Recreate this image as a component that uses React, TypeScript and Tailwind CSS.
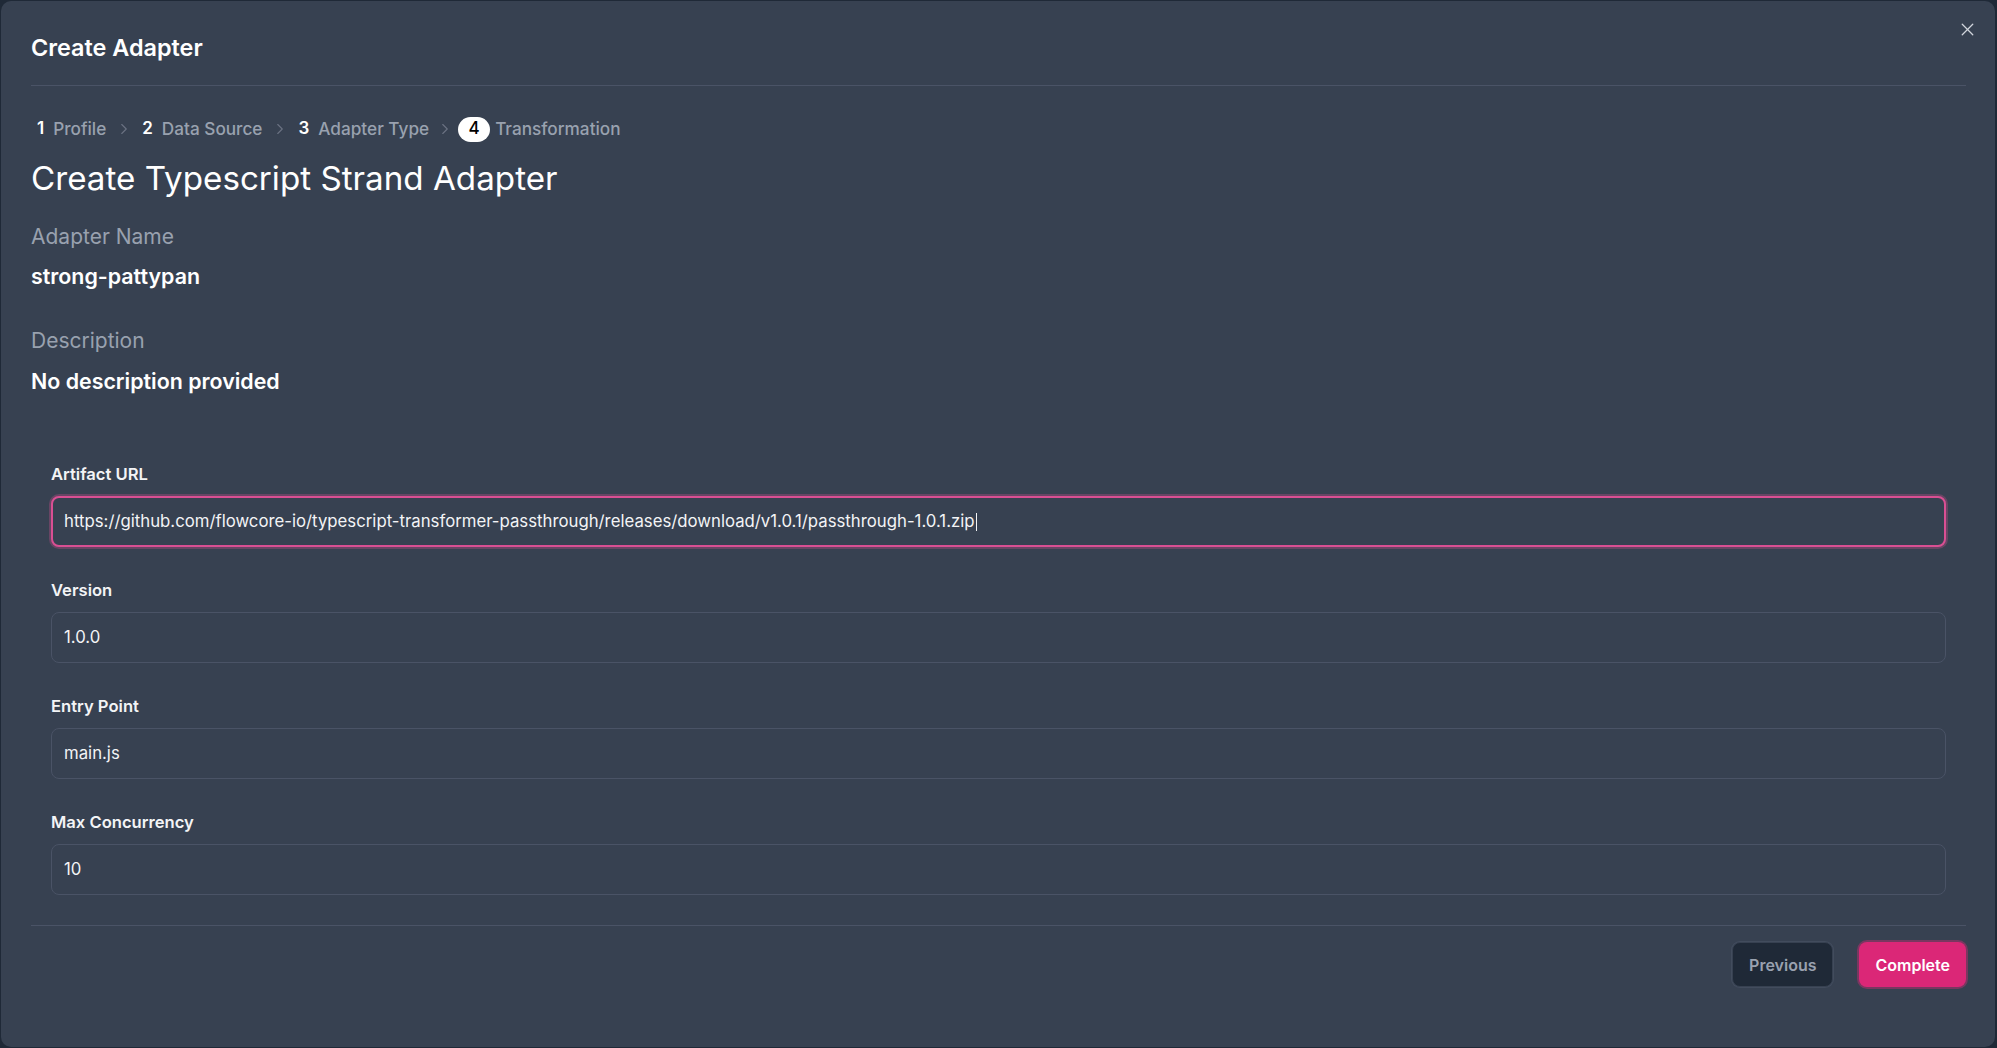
import React from "react";
import { X, ChevronRight } from "lucide-react";

const Field = ({ label, value, focused }: { label: string; value: string; focused?: boolean }) => (
  <div className="flex flex-col">
    <label className="text-[16.6px] leading-6 font-semibold text-gray-100">{label}</label>
    <div
      className={
        focused
          ? "mt-[10px] h-[51px] rounded-lg border-2 border-[#d94f93] ring-2 ring-[#d94f93]/30 bg-[#374151] flex items-center px-[11px]"
          : "mt-[10px] h-[51px] rounded-lg border border-[#4a5366] bg-[#374151] flex items-center px-[12px]"
      }
    >
      <span className="text-[16.75px] text-gray-100">
        {value}
        {focused && <span className="inline-block w-px h-[18px] bg-gray-100 align-middle ml-px" />}
      </span>
    </div>
  </div>
);

const Step = ({ n, label, active }: { n: number; label: string; active?: boolean }) => (
  <div className="flex items-center">
    {active ? (
      <span className="flex items-center justify-center w-[32px] h-[25px] rounded-full bg-white text-black text-[17px] font-medium">{n}</span>
    ) : (
      <span className="text-white text-[17px] font-semibold">{n}</span>
    )}
    <span className={active ? "ml-[5px] text-gray-400 text-[17.2px] font-medium" : "ml-[9px] text-gray-400 text-[17.2px] font-medium"}>{label}</span>
  </div>
);

export default function App() {
  return (
    <div className="w-full h-[1048px] bg-[#1f2937] pt-px pl-px pr-[2px] pb-px" style={{ fontFamily: "Inter, 'Noto Sans', sans-serif" }}>
      <div className="relative h-full rounded-[10px] bg-[#374151] pl-[30px] pr-[29px] flex flex-col">
        <button className="absolute right-[17px] top-[18px] text-gray-300">
          <X size={21} strokeWidth={1.5} />
        </button>
        <div className="pt-[31px] pb-[21px] border-b border-[#4a5366]">
          <h1 className="text-[23.4px] leading-8 font-semibold text-white">Create Adapter</h1>
        </div>

        <div className="mt-[31px] flex items-center h-6 pl-[6px]">
          <Step n={1} label="Profile" />
          <ChevronRight size={18} strokeWidth={1.5} className="mx-[9px] text-gray-500" />
          <Step n={2} label="Data Source" />
          <ChevronRight size={18} strokeWidth={1.5} className="mx-[9px] text-gray-500" />
          <Step n={3} label="Adapter Type" />
          <ChevronRight size={18} strokeWidth={1.5} className="ml-[7px] mr-[4px] text-gray-500" />
          <Step n={4} label="Transformation" active />
        </div>

        <h2 className="mt-[17px] text-[33.2px] leading-10 font-normal text-white">Create Typescript Strand Adapter</h2>

        <div className="mt-[25px] text-[21px] leading-7 text-gray-400">Adapter Name</div>
        <div className="mt-[11px] text-[21.4px] leading-7 font-semibold text-white">strong-pattypan</div>

        <div className="mt-[37px] text-[21px] leading-7 text-gray-400">Description</div>
        <div className="mt-[12px] text-[21.4px] leading-7 font-semibold text-white">No description provided</div>

        <div className="mt-[67px] px-[20px] flex flex-col gap-[31px]">
          <Field
            label="Artifact URL"
            value="https://github.com/flowcore-io/typescript-transformer-passthrough/releases/download/v1.0.1/passthrough-1.0.1.zip"
            focused
          />
          <Field label="Version" value="1.0.0" />
          <Field label="Entry Point" value="main.js" />
          <Field label="Max Concurrency" value="10" />
        </div>

        <div className="mt-[30px] border-t border-[#4a5366] pt-[16px] flex justify-end gap-[26px]">
          <button className="h-[45px] px-4 rounded-lg bg-[#1f2937] border border-[#374151] ring-1 ring-[#4a5366]/60 text-gray-400 text-base font-semibold">
            Previous
          </button>
          <button className="h-[45px] px-4 rounded-lg bg-[#db2777] ring-2 ring-[#db2777]/40 text-white text-base font-semibold">
            Complete
          </button>
        </div>
      </div>
    </div>
  );
}
